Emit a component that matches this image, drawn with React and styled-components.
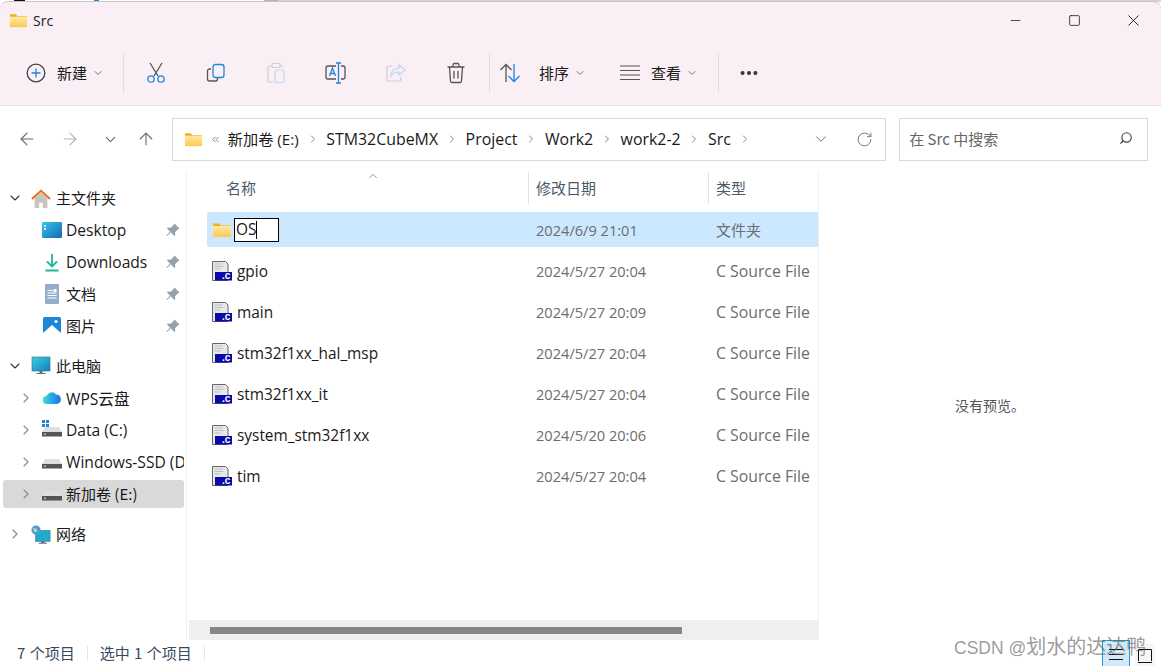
import React from 'react'
import styled, { createGlobalStyle } from 'styled-components'
import { ChevronDown, ChevronRight, ChevronUp, ArrowLeft, ArrowRight, ArrowUp, RotateCw, Search, Minus, Square, X, ChevronsLeft, MoreHorizontal } from 'lucide-react'

const UI_FONT = `"Open Sans", "Noto Sans CJK SC", sans-serif`
const CJK_FONT = `"Noto Sans CJK SC", "Open Sans", sans-serif`

const GlobalStyle = createGlobalStyle`
  html, body { margin: 0; padding: 0; background: #fff; }
  body { font-family: ${UI_FONT}; color: #1a1a1a; overflow: hidden; }
  * { box-sizing: border-box; }
`

const Page = styled.div`
  width: 1161px;
  height: 666px;
  display: flex;
  flex-direction: column;
  position: relative;
  overflow: hidden;
`
const Sliver = styled.div`
  height: 2px;
  flex: none;
  background: linear-gradient(90deg, #fff 14px, #111 14px, #111 25px, #fff 25px, #fff 94px, #1e88e5 94px, #1e88e5 99px, #fff 99px, #fff 264px, #b5b5b5 264px, #b5b5b5 278px, #d4d4d4 278px);
`
const Header = styled.header`
  flex: none;
  height: 105px;
  background: #f9eff5;
  border-top-left-radius: 8px;
  border-top-right-radius: 8px;
  border-bottom: 1px solid #e6e2e5;
  display: flex;
  flex-direction: column;
  margin-top: -1px;
  border-top: 1px solid #c8c4c7;
`
const TitleBar = styled.div`
  height: 36px;
  display: flex;
  align-items: center;
  padding-left: 9px;
  font-size: 14px;
  gap: 5px;
`
const TitleText = styled.span`
  flex: 1;
  color: #222;
`
const WinButton = styled.div`
  width: 59px;
  display: flex;
  justify-content: center;
  align-items: center;
  color: #111;
`
const WinControls = styled.div`
  display: flex;
  margin-right: -2px;
`
const ToolBar = styled.div`
  flex: 1;
  display: flex;
  align-items: center;
  padding: 3px 0 0 14px;
`
const ToolSep = styled.div`
  width: 1px;
  height: 40px;
  background: #e3dde1;
`
const ToolIcon = styled.div`
  width: 60px;
  height: 40px;
  display: flex;
  align-items: center;
  justify-content: center;
`
const LabelButton = styled.div`
  width: ${p => p.$width}px;
  padding-left: ${p => p.$pad || 0}px;
  display: flex;
  align-items: center;
  font-family: ${CJK_FONT};
  font-size: 15px;
  color: #1a1a1a;
  svg { flex: none; }
`
const Caption = styled.span`
  margin: 0 ${p => p.$after}px 0 ${p => p.$before}px;
  padding-bottom: 2px;
`
const AddressRow = styled.div`
  flex: none;
  height: 66px;
  display: flex;
  align-items: center;
  padding-right: 13px;
`
const NavGroup = styled.div`
  width: 172px;
  display: flex;
  align-items: center;
  padding-left: 17px;
`
const NavButton = styled.div`
  width: 20px;
  margin-left: ${p => p.$gap || 0}px;
  display: flex;
  justify-content: center;
  color: ${p => (p.$off ? '#b5b5b5' : '#666')};
`
const AddressBox = styled.div`
  width: 715px;
  height: 43px;
  border: 1px solid #d9d9d9;
  display: flex;
  align-items: center;
  padding-left: 11px;
  color: #1a1a1a;
`
const Crumb = styled.span`
  white-space: nowrap;
  font-size: ${p => (p.$cjk ? 15.2 : 15.9)}px;
  padding-bottom: ${p => (p.$cjk ? 2 : 0)}px;
`
const CrumbSep = styled.span`
  width: 27.5px;
  display: flex;
  justify-content: center;
  color: #666;
`
const AddressEnd = styled.div`
  margin-left: auto;
  display: flex;
  align-items: center;
  color: #666;
  padding-right: 12px;
  gap: 26px;
`
const SearchBox = styled.div`
  width: 249px;
  height: 43px;
  margin-left: 13px;
  border: 1px solid #d9d9d9;
  display: flex;
  align-items: center;
  justify-content: space-between;
  padding: 0 14px 2px 9px;
  font-family: ${CJK_FONT};
  font-size: 15px;
  color: #666;
`
const Body = styled.div`
  flex: 1;
  min-height: 0;
  display: flex;
`
const Sidebar = styled.nav`
  width: 187px;
  flex: none;
  border-right: 1px solid #f0f0f0;
  padding: 12px 2px 0 3px;
  display: flex;
  flex-direction: column;
  gap: 12px;
`
const NavSection = styled.div`
  display: flex;
  flex-direction: column;
  gap: 4px;
`
const NavRow = styled.div`
  height: 28px;
  display: flex;
  align-items: center;
  border-radius: 3px;
  padding-left: ${p => (p.$level ? 15 : 4)}px;
  background: ${p => (p.$active ? '#d9d9d9' : 'transparent')};
  color: #1a1a1a;
`
const Twisty = styled.span`
  width: 16px;
  height: 16px;
  flex: none;
  margin-right: 8px;
  display: flex;
  align-items: center;
  justify-content: center;
  color: ${p => (p.$open ? '#333' : '#888')};
`
const NavIcon = styled.span`
  width: 20px;
  height: 20px;
  flex: none;
  margin-right: ${p => (p.$level ? 4 : 5)}px;
  display: flex;
`
const NavText = styled.span`
  flex: 1;
  min-width: 0;
  overflow: hidden;
  white-space: nowrap;
  font-family: ${p => (p.$latin ? UI_FONT : CJK_FONT)};
  font-size: ${p => (p.$latin ? 15.6 : 15)}px;
  padding-bottom: ${p => (p.$latin ? 0 : 2)}px;
`
const PinSlot = styled.span`
  width: 14px;
  flex: none;
  margin-right: 4px;
  display: flex;
`
const FilePane = styled.section`
  width: 632px;
  flex: none;
  border-right: 1px solid #f0f0f0;
  display: flex;
  flex-direction: column;
  position: relative;
`
const ColumnHeader = styled.div`
  height: 32px;
  margin-left: 20px;
  margin-bottom: 8px;
  display: grid;
  grid-template-columns: 321px 180px 110px;
  font-family: ${CJK_FONT};
  font-size: 15px;
  color: #4a5a6c;
`
const HeadCell = styled.div`
  display: flex;
  align-items: center;
  padding: 0 0 2px ${p => (p.$first ? 18 : 7)}px;
  border-left: 1px solid ${p => (p.$first ? 'transparent' : '#e3e3e3')};
`
const SortCaret = styled.span`
  position: absolute;
  left: 179px;
  top: -3px;
  color: #666;
  display: flex;
`
const FileList = styled.div`
  margin-left: 20px;
  display: flex;
  flex-direction: column;
  gap: 6px;
`
const FileRow = styled.div`
  height: 35px;
  display: grid;
  grid-template-columns: 321px 180px 110px;
  align-items: center;
  border-radius: 2px 0 0 2px;
  background: ${p => (p.$selected ? '#cce8ff' : 'transparent')};
  font-size: 15.4px;
`
const NameCell = styled.div`
  display: flex;
  align-items: center;
  gap: 5px;
  padding: ${p => (p.$nudge ? 1 : 0)}px 0 0 5px;
  color: #1a1a1a;
`
const MetaCell = styled.div`
  padding-left: 8px;
  font-size: ${p => p.$size}px;
  color: #6d6d6d;
  white-space: nowrap;
`
const RenameBox = styled.div`
  width: 45px;
  height: 24px;
  margin-left: -3px;
  border: 1px solid #000;
  background: #fff;
  padding-left: 1px;
  display: flex;
  align-items: center;
  line-height: 1;
`
const Caret = styled.span`
  width: 1px;
  height: 18px;
  background: #000;
`
const ScrollTrack = styled.div`
  margin: auto 0 0 2px;
  height: 20px;
  width: 629px;
  background: #efefef;
  padding: 7px 0 0 21px;
`
const ScrollThumb = styled.div`
  width: 472px;
  height: 7px;
  background: #888;
`
const Preview = styled.aside`
  flex: 1;
  display: flex;
  align-items: center;
  justify-content: center;
  font-family: ${CJK_FONT};
  font-size: 14px;
  color: #555;
  padding-bottom: 2px;
`
const StatusBar = styled.footer`
  flex: none;
  height: 26px;
  display: flex;
  align-items: center;
  font-family: ${CJK_FONT};
  font-size: 15px;
  word-spacing: 1px;
  color: #36495e;
  padding-left: 17px;
`
const StatusText = styled.span`
  padding-bottom: 2px;
`
const StatusSep = styled.span`
  width: 1px;
  height: 14px;
  background: #e5e5e5;
  margin: 0 12px;
`
const ViewToggles = styled.div`
  margin-left: auto;
  margin-right: 6px;
  height: 26px;
  display: flex;
  align-items: flex-end;
  gap: 5px;
`
const ViewButton = styled.div`
  width: ${p => (p.$active ? 28 : 20)}px;
  height: ${p => (p.$active ? 26 : 22)}px;
  display: flex;
  align-items: center;
  justify-content: center;
  background: ${p => (p.$active ? '#d3e9f6' : '#f6f6f6')};
  border: 1px solid ${p => (p.$active ? '#19a0dc' : 'transparent')};
  border-bottom: 0;
`
const Watermark = styled.div`
  position: absolute;
  left: 954px;
  top: 634px;
  font-size: 20px;
  line-height: 27px;
  color: rgba(90, 90, 90, 0.62);
  white-space: nowrap;
  font-family: "Liberation Sans", "Noto Sans CJK SC", sans-serif;
  pointer-events: none;
`
const WatermarkLatin = styled.span`
  font-size: 17.5px;
`

const FolderIcon = ({ id, size = 20 }) => (
  <svg width={size} height={size} viewBox="0 0 20 20">
    <defs>
      <linearGradient id={id} x1="0" y1="0" x2="0" y2="1">
        <stop offset="0" stopColor="#ffeaa6" />
        <stop offset="1" stopColor="#fdc94e" />
      </linearGradient>
    </defs>
    <path d="M1 3.500h6l2 2h10v2H1z" fill="#f3ae1e" />
    <path d="M1 6h18v11H1z" fill={`url(#${id})`} />
  </svg>
)

const ScissorsIcon = () => (
  <svg width="20" height="22" viewBox="0 0 20 22" fill="none" strokeWidth="1.3">
    <path d="M4 1l8 13M16 1L8 14" stroke="#555" />
    <circle cx="5" cy="17" r="3.200" stroke="#1b86dc" />
    <circle cx="15" cy="17" r="3.200" stroke="#1b86dc" />
  </svg>
)
const CopyIcon = () => (
  <svg width="20" height="20" viewBox="0 0 20 20" fill="none" strokeWidth="1.3">
    <path d="M5 6H3.500A2 2 0 0 0 1.500 8v8a2 2 0 0 0 2 2h6a2 2 0 0 0 2-2v-1" stroke="#555" />
    <rect x="7" y="1.500" width="11" height="13" rx="2.500" stroke="#1b86dc" />
  </svg>
)
const PasteIcon = () => (
  <svg width="20" height="22" viewBox="0 0 20 22" fill="none" strokeWidth="1.2">
    <path d="M6 4H4a2 2 0 0 0-2 2v12a2 2 0 0 0 2 2h3M14 4h1a2 2 0 0 1 2 1" stroke="#cfcfcf" />
    <rect x="6" y="1.500" width="8" height="4" rx="1" stroke="#cfcfcf" />
    <rect x="9" y="8" width="9" height="12.500" rx="2" stroke="#b7d9f3" />
  </svg>
)
const RenameIcon = () => (
  <svg width="22" height="22" viewBox="0 0 22 22" fill="none" strokeWidth="1.3">
    <path d="M11 4H3a2 2 0 0 0-2 2v9a2 2 0 0 0 2 2h8M16 4h2a2 2 0 0 1 2 2v9a2 2 0 0 1-2 2h-2" stroke="#555" />
    <path d="M13.500 1v20M11 1h5M11 21h5M4.500 14l3-8 3 8M5.500 11.500h4" stroke="#1b86dc" />
  </svg>
)
const ShareIcon = () => (
  <svg width="22" height="20" viewBox="0 0 22 20" fill="none" strokeWidth="1.2">
    <path d="M7 3H4a2 2 0 0 0-2 2v11a2 2 0 0 0 2 2h10a2 2 0 0 0 2-2v-2" stroke="#cfcfcf" />
    <path d="M14 2l6 5-6 5V9c-4 0-6 1-8 4 0-5 3-7.500 8-8z" stroke="#b7d9f3" />
  </svg>
)
const TrashIcon = () => (
  <svg width="20" height="22" viewBox="0 0 20 22" fill="none" stroke="#555" strokeWidth="1.3">
    <path d="M1.500 5h17M7 5V3a1.500 1.500 0 0 1 1.500-1.500h3A1.500 1.500 0 0 1 13 3v2M3.500 5l1 14a1.500 1.500 0 0 0 1.500 1.500h8a1.500 1.500 0 0 0 1.500-1.500l1-14M8 9v7.500M12 9v7.500" />
  </svg>
)
const SortIcon = () => (
  <svg width="22" height="20" viewBox="0 0 22 20" fill="none" strokeWidth="1.3">
    <path d="M7 19V1.500M1.500 7L7 1.500 12.500 7" stroke="#555" />
    <path d="M15 1v17.500M9.500 13l5.500 5.500 5.500-5.500" stroke="#1b86dc" />
  </svg>
)
const ViewIcon = () => (
  <svg width="20" height="16" viewBox="0 0 20 16" stroke="#555" strokeWidth="1.2">
    <path d="M0 1h20M0 5.500h20M0 10h20M0 14.500h20" />
  </svg>
)

const HomeIcon = () => (
  <svg width="22" height="22" viewBox="0 0 22 22">
    <path d="M4 10l7-6 7 6v10a1 1 0 0 1-1 1h-4v-6H9v6H5a1 1 0 0 1-1-1z" fill="#c9c4bd" />
    <path d="M1 11l10-9 10 9" fill="none" stroke="#e2701c" strokeWidth="2.2" />
  </svg>
)
const DesktopIcon = () => (
  <svg width="20" height="20" viewBox="0 0 20 20">
    <defs><linearGradient id="dsk" x1="0" y1="0" x2="1" y2="1"><stop offset="0" stopColor="#35c5e6" /><stop offset="1" stopColor="#1668b8" /></linearGradient></defs>
    <rect x="0" y="2" width="20" height="16" rx="1" fill="url(#dsk)" />
    <path d="M2 5h2v1.500H2zM2 8h2v1.500H2z" fill="#fff" />
  </svg>
)
const DownloadIcon = () => (
  <svg width="20" height="20" viewBox="0 0 20 20" fill="none" stroke="#1fb59a" strokeWidth="1.8">
    <path d="M10 2v12M5 9.500l5 5 5-5M3.500 18.500h13" />
  </svg>
)
const DocIcon = () => (
  <svg width="20" height="20" viewBox="0 0 20 20">
    <rect x="3" y="0" width="14" height="20" rx="1" fill="#94aecb" />
    <path d="M5.500 6h5v1h-5zM5.500 8.500h9v1h-9zM5.500 11h9v1h-9zM5.500 13.500h9v1h-9z" fill="#fff" />
    <rect x="11.500" y="5" width="3" height="3" fill="#fff" />
  </svg>
)
const PictureIcon = () => (
  <svg width="20" height="20" viewBox="0 0 20 20">
    <rect x="1" y="1" width="18" height="18" rx="1.500" fill="#1b87d6" />
    <circle cx="14" cy="5.500" r="1.500" fill="#fff" />
    <path d="M1 17l9-8 9 8v2H1z" fill="#fff" />
  </svg>
)
const PinIcon = () => (
  <svg width="14" height="14" viewBox="0 0 14 14">
    <path d="M8.500 0.500l5 5-1.500.8-3 3 .2 2.700-1 1L4.800 9.200 1 13l-.8-.2L4 8.500 1 5.500l1-1 2.800.2 3-3z" fill="#98a1a8" />
  </svg>
)
const MonitorIcon = () => (
  <svg width="20" height="20" viewBox="0 0 20 20">
    <defs><linearGradient id="mon" x1="0" y1="0" x2="1" y2="1"><stop offset="0" stopColor="#3ad2e2" /><stop offset="1" stopColor="#127fbe" /></linearGradient></defs>
    <rect x="1" y="1" width="18" height="14" fill="url(#mon)" stroke="#2a6f8c" strokeWidth=".6" />
    <path d="M8.500 15h3v2h-3zM5.500 17h9v1h-9z" fill="#60717d" />
  </svg>
)
const CloudIcon = () => (
  <svg width="20" height="20" viewBox="0 0 20 20">
    <defs><linearGradient id="cld" x1="0" y1="0" x2="1" y2="0"><stop offset="0" stopColor="#45e0c8" /><stop offset=".5" stopColor="#2aa5ee" /><stop offset="1" stopColor="#1878e0" /></linearGradient></defs>
    <path d="M5 16a4 4 0 0 1-.5-8A5.500 5.500 0 0 1 14 6.500a4.800 4.800 0 0 1 1 9.500z" fill="url(#cld)" />
  </svg>
)
const DriveIcon = ({ windows }) => (
  <svg width="20" height="20" viewBox="0 0 20 20">
    <path d="M3 7h14l3 5H0z" fill="#dfdfdf" />
    <rect x="0" y="12" width="20" height="4.500" fill="#555" />
    <rect x="2" y="13.500" width="2" height="1.500" fill="#7fe07f" />
    {windows && <path d="M0 0h3v3H0zM4 0h3v3H4zM0 4h3v3H0zM4 4h3v3H4z" fill="#1b87d6" />}
  </svg>
)
const NetworkIcon = () => (
  <svg width="22" height="22" viewBox="0 0 22 22">
    <rect x="5" y="6" width="16" height="12" fill="#22a9d0" stroke="#2a6f8c" strokeWidth=".6" />
    <path d="M11 18h4v1.500h-4zM8.500 19.500h9v1h-9z" fill="#60717d" />
    <circle cx="5.500" cy="5.500" r="5" fill="#4d9bd8" />
    <path d="M2 3l4 1 1 3-3 1z" fill="#b4d9b0" />
  </svg>
)
const CFileIcon = () => (
  <svg width="20" height="20" viewBox="0 0 20 20">
    <path d="M0.500 0.500h13l2.500 2.500v16.500H0.500z" fill="#e8e8e8" stroke="#666" />
    <path d="M2.500 3h8M2.500 5.500h9M2.500 8h6" stroke="#bdbdbd" />
    <rect x="3" y="11" width="17" height="8.500" fill="#0a0aa8" />
    <text x="10" y="18" fontSize="10" fontWeight="700" fill="#fff" fontFamily="Liberation Sans, sans-serif">.c</text>
  </svg>
)

const crumbs = [
  { label: '新加卷 (E:)', cjk: true },
  { label: 'STM32CubeMX' },
  { label: 'Project' },
  { label: 'Work2' },
  { label: 'work2-2' },
  { label: 'Src' },
]

const files = [
  { name: 'gpio', date: '2024/5/27 20:04' },
  { name: 'main', date: '2024/5/27 20:09' },
  { name: 'stm32f1xx_hal_msp', date: '2024/5/27 20:04' },
  { name: 'stm32f1xx_it', date: '2024/5/27 20:04' },
  { name: 'system_stm32f1xx', date: '2024/5/20 20:06' },
  { name: 'tim', date: '2024/5/27 20:04' },
]

function SideItem({ level, open, twisty, active, icon, pinned, latin, children }) {
  return (
    <NavRow $level={level} $active={active}>
      <Twisty $open={open}>
        {twisty && (open ? <ChevronDown size={16} strokeWidth={1.6} /> : <ChevronRight size={16} strokeWidth={1.6} />)}
      </Twisty>
      <NavIcon $level={level}>{icon}</NavIcon>
      <NavText $latin={latin}>{children}</NavText>
      {pinned && <PinSlot><PinIcon /></PinSlot>}
    </NavRow>
  )
}

export default function App() {
  return (
    <Page>
      <GlobalStyle />
      <Sliver />
      <Header>
        <TitleBar>
          <FolderIcon id="fTitle" size={19} />
          <TitleText>Src</TitleText>
          <WinControls>
            <WinButton><Minus size={15} strokeWidth={1.2} /></WinButton>
            <WinButton><Square size={13} strokeWidth={1.4} /></WinButton>
            <WinButton><X size={19} strokeWidth={1.1} /></WinButton>
          </WinControls>
        </TitleBar>
        <ToolBar>
          <LabelButton $width={109} $pad={12}>
            <svg width="20" height="20" viewBox="0 0 20 20" fill="none" strokeWidth="1.3">
              <circle cx="10" cy="10" r="8.800" stroke="#444" />
              <path d="M10 5.500v9M5.500 10h9" stroke="#1b86dc" />
            </svg>
            <Caption $before={11} $after={5}>新建</Caption>
            <ChevronDown size={12} color="#777" />
          </LabelButton>
          <ToolSep />
          <ToolIcon style={{ marginLeft: 2 }}><ScissorsIcon /></ToolIcon>
          <ToolIcon><CopyIcon /></ToolIcon>
          <ToolIcon><PasteIcon /></ToolIcon>
          <ToolIcon><RenameIcon /></ToolIcon>
          <ToolIcon><ShareIcon /></ToolIcon>
          <ToolIcon><TrashIcon /></ToolIcon>
          <ToolSep style={{ marginLeft: 3 }} />
          <LabelButton $width={110} $pad={9}>
            <SortIcon />
            <Caption $before={18} $after={5}>排序</Caption>
            <ChevronDown size={12} color="#777" />
          </LabelButton>
          <LabelButton $width={118} $pad={20}>
            <ViewIcon />
            <Caption $before={11} $after={5}>查看</Caption>
            <ChevronDown size={12} color="#777" />
          </LabelButton>
          <ToolSep />
          <ToolIcon><MoreHorizontal size={22} strokeWidth={2.4} color="#333" /></ToolIcon>
        </ToolBar>
      </Header>
      <AddressRow>
        <NavGroup>
          <NavButton><ArrowLeft size={20} strokeWidth={1.3} /></NavButton>
          <NavButton $off $gap={23}><ArrowRight size={20} strokeWidth={1.3} /></NavButton>
          <NavButton $gap={20}><ChevronDown size={17} strokeWidth={1.5} /></NavButton>
          <NavButton $gap={16}><ArrowUp size={20} strokeWidth={1.3} /></NavButton>
        </NavGroup>
        <AddressBox>
          <FolderIcon id="fAddr" size={19} />
          <ChevronsLeft size={11} color="#777" style={{ margin: '0 7px 0 7px' }} />
          {crumbs.map(c => (
            <React.Fragment key={c.label}>
              <Crumb $cjk={c.cjk}>{c.label}</Crumb>
              <CrumbSep><ChevronRight size={12} strokeWidth={1.6} /></CrumbSep>
            </React.Fragment>
          ))}
          <AddressEnd>
            <ChevronDown size={18} strokeWidth={1.2} />
            <RotateCw size={17} strokeWidth={1.2} />
          </AddressEnd>
        </AddressBox>
        <SearchBox>
          <span>在 Src 中搜索</span>
          <Search size={14} strokeWidth={2} color="#444" style={{ transform: 'scaleX(-1)' }} />
        </SearchBox>
      </AddressRow>
      <Body>
        <Sidebar>
          <NavSection>
            <SideItem twisty open icon={<HomeIcon />}>主文件夹</SideItem>
            <SideItem level={1} latin icon={<DesktopIcon />} pinned>Desktop</SideItem>
            <SideItem level={1} latin icon={<DownloadIcon />} pinned>Downloads</SideItem>
            <SideItem level={1} icon={<DocIcon />} pinned>文档</SideItem>
            <SideItem level={1} icon={<PictureIcon />} pinned>图片</SideItem>
          </NavSection>
          <NavSection>
            <SideItem twisty open icon={<MonitorIcon />}>此电脑</SideItem>
            <SideItem level={1} twisty latin icon={<CloudIcon />}>WPS云盘</SideItem>
            <SideItem level={1} twisty latin icon={<DriveIcon windows />}>Data (C:)</SideItem>
            <SideItem level={1} twisty latin icon={<DriveIcon />}>Windows-SSD (D:)</SideItem>
            <SideItem level={1} twisty active icon={<DriveIcon />}>新加卷 (E:)</SideItem>
          </NavSection>
          <NavSection>
            <SideItem twisty icon={<NetworkIcon />}>网络</SideItem>
          </NavSection>
        </Sidebar>
        <FilePane>
          <SortCaret><ChevronUp size={14} strokeWidth={1.2} /></SortCaret>
          <ColumnHeader>
            <HeadCell $first>名称</HeadCell>
            <HeadCell>修改日期</HeadCell>
            <HeadCell>类型</HeadCell>
          </ColumnHeader>
          <FileList>
            <FileRow $selected>
              <NameCell>
                <FolderIcon id="fRow" />
                <RenameBox>OS<Caret /></RenameBox>
              </NameCell>
              <MetaCell $size={14.6}>2024/6/9 21:01</MetaCell>
              <MetaCell $size={15}>文件夹</MetaCell>
            </FileRow>
            {files.map(f => (
              <FileRow key={f.name}>
                <NameCell $nudge><CFileIcon />{f.name}</NameCell>
                <MetaCell $size={14.6}>{f.date}</MetaCell>
                <MetaCell $size={15.8}>C Source File</MetaCell>
              </FileRow>
            ))}
          </FileList>
          <ScrollTrack><ScrollThumb /></ScrollTrack>
        </FilePane>
        <Preview>没有预览。</Preview>
      </Body>
      <StatusBar>
        <StatusText>7 个项目</StatusText>
        <StatusSep />
        <StatusText>选中 1 个项目</StatusText>
        <StatusSep />
        <ViewToggles>
          <ViewButton $active>
            <svg width="14" height="16" viewBox="0 0 14 16" stroke="#111"><path d="M0 3.500h14M0 8.500h14M0 13.500h14" /></svg>
          </ViewButton>
          <ViewButton>
            <svg width="14" height="14" viewBox="0 0 14 14" fill="none" stroke="#111"><path d="M.5 12V.5h13V12M0 13.500h14" /></svg>
          </ViewButton>
        </ViewToggles>
      </StatusBar>
      <Watermark><WatermarkLatin>CSDN @</WatermarkLatin>划水的达达鸭</Watermark>
    </Page>
  )
}
